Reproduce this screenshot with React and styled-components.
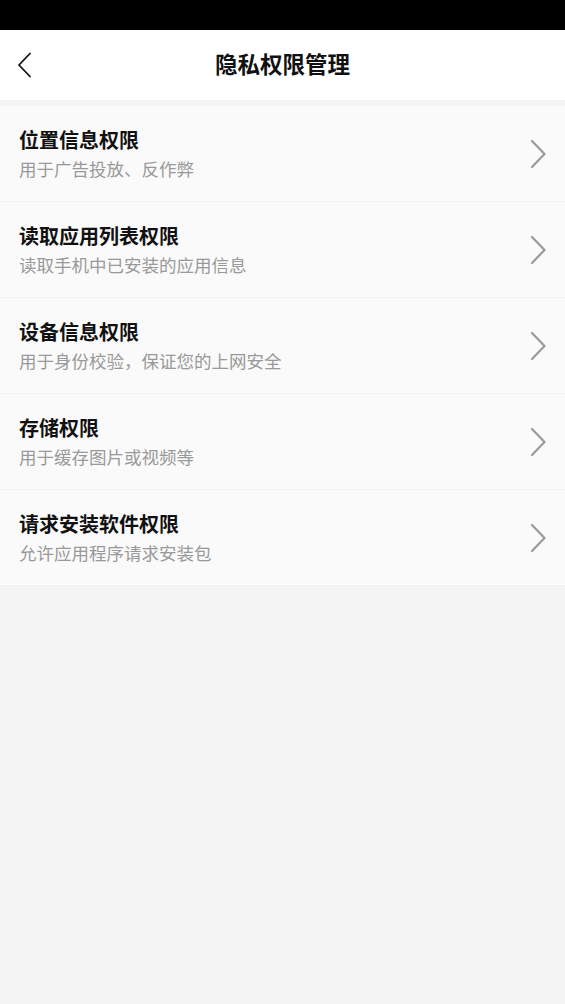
import React from "react";
import styled, { createGlobalStyle } from "styled-components";

const Global = createGlobalStyle`
  html, body { margin: 0; padding: 0; background: #f4f4f4; }
  body { font-family: "Noto Sans CJK SC", "Noto Sans", sans-serif; }
  #root { min-height: 1004px; }
`;

const Page = styled.div`
  width: 565px;
  min-height: 1004px;
  background: #f4f4f4;
  display: flex;
  flex-direction: column;
`;

const StatusBar = styled.div`
  height: 30px;
  background: #000;
`;

const Header = styled.header`
  height: 70px;
  background: #fff;
  display: grid;
  grid-template-columns: 60px 1fr 60px;
  align-items: center;
`;

const BackButton = styled.button`
  border: 0;
  background: none;
  padding: 0 0 0 16px;
  height: 70px;
  display: flex;
  align-items: center;
  cursor: pointer;
`;

const Title = styled.h1`
  margin: 0 0 4px;
  text-align: center;
  font-size: 22.5px;
  font-weight: 700;
  color: #111;
  line-height: 30px;
`;

const List = styled.div`
  margin-top: 6px;
  display: flex;
  flex-direction: column;
`;

const Row = styled.div`
  background: #fafafa;
  border-bottom: 1px solid #f1f1f1;
  height: 95px;
  padding: 0 18px 0 19px;
  display: flex;
  align-items: center;
  justify-content: space-between;
`;

const Texts = styled.div`
  display: flex;
  flex-direction: column;
  gap: 3px;
`;

const RowTitle = styled.div`
  font-size: 20px;
  font-weight: 700;
  color: #111;
  line-height: 28px;
`;

const RowSub = styled.div`
  font-size: 17.5px;
  color: #999;
  line-height: 24px;
`;

const items = [
  ["位置信息权限", "用于广告投放、反作弊"],
  ["读取应用列表权限", "读取手机中已安装的应用信息"],
  ["设备信息权限", "用于身份校验，保证您的上网安全"],
  ["存储权限", "用于缓存图片或视频等"],
  ["请求安装软件权限", "允许应用程序请求安装包"],
];

const Chevron = () => (
  <svg width="18" height="30" viewBox="0 0 18 30" fill="none">
    <path d="M3 2 L15.5 15 L3 28" stroke="#9a9a9a" strokeWidth="2.2" strokeLinecap="round" strokeLinejoin="round" />
  </svg>
);

const BackIcon = () => (
  <svg width="16" height="26" viewBox="0 0 16 26" fill="none">
    <path d="M14 1.5 L3 13 L14 24.5" stroke="#111" strokeWidth="1.8" strokeLinecap="round" strokeLinejoin="round" />
  </svg>
);

export default function App() {
  return (
    <Page>
      <Global />
      <StatusBar />
      <Header>
        <BackButton aria-label="返回">
          <BackIcon />
        </BackButton>
        <Title>隐私权限管理</Title>
        <span />
      </Header>
      <List>
        {items.map(([t, s]) => (
          <Row key={t}>
            <Texts>
              <RowTitle>{t}</RowTitle>
              <RowSub>{s}</RowSub>
            </Texts>
            <Chevron />
          </Row>
        ))}
      </List>
    </Page>
  );
}
